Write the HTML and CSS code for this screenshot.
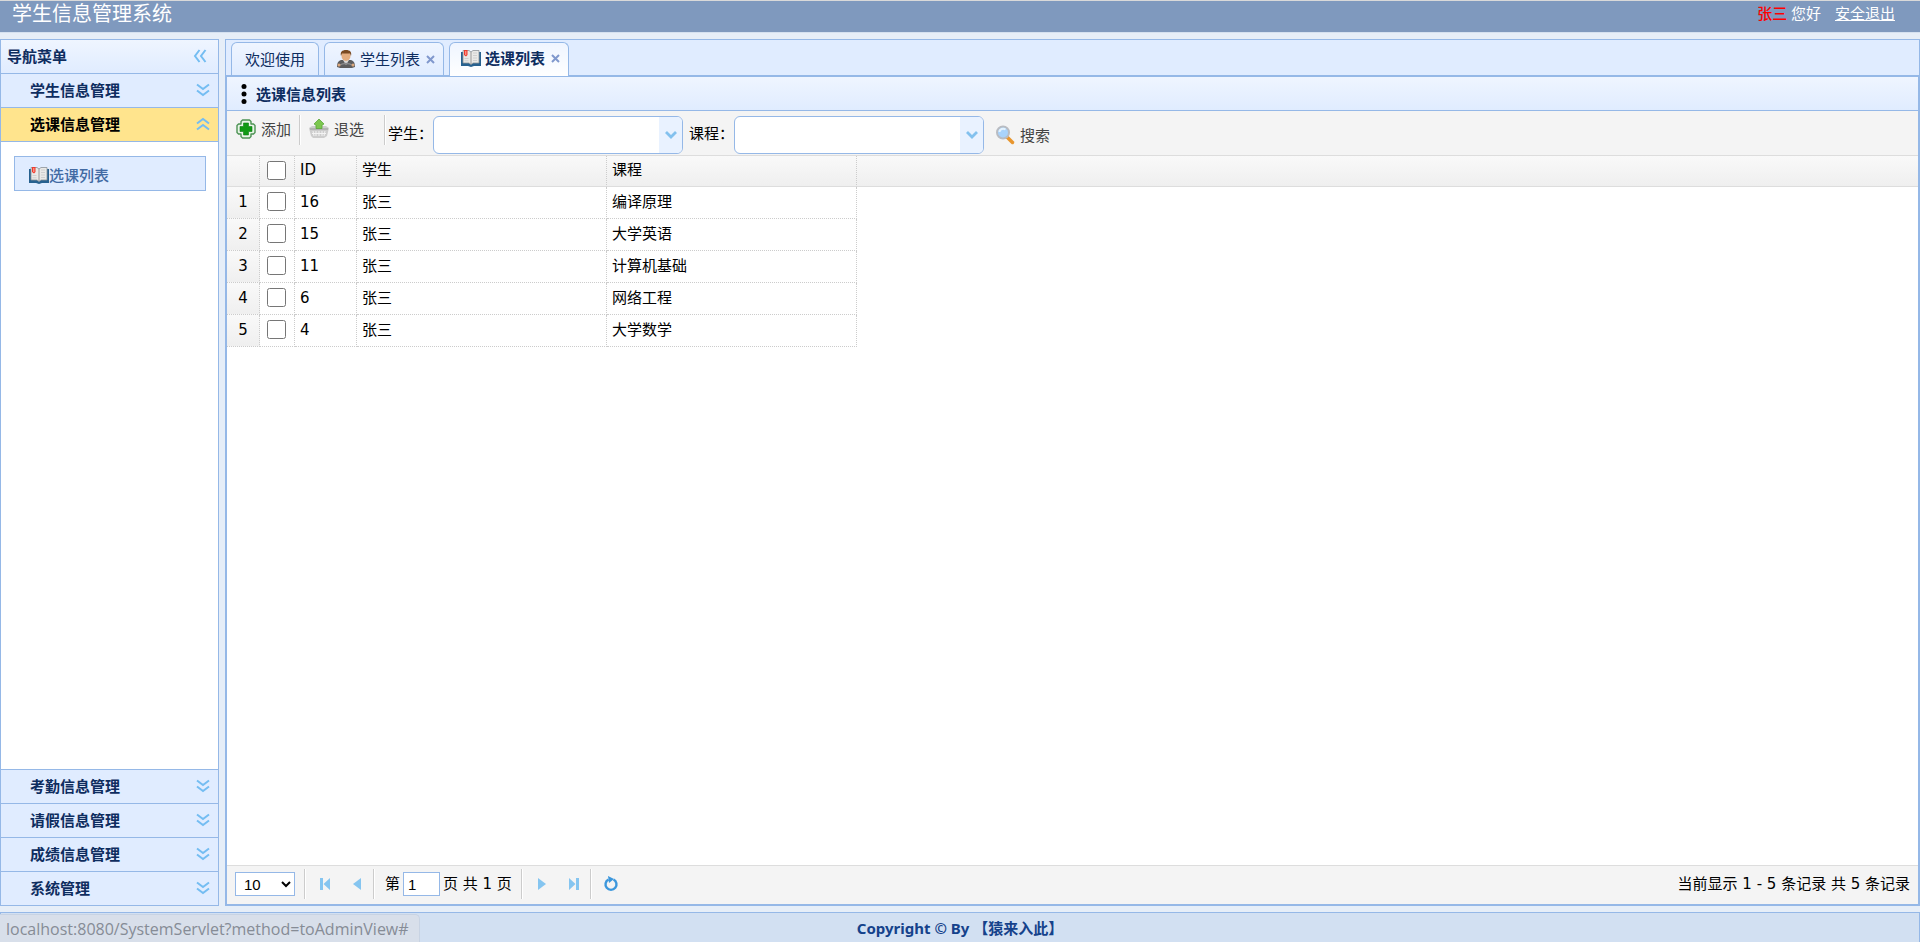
FILE: index.html
```
<!DOCTYPE html>
<html lang="zh-CN">
<head>
<meta charset="utf-8">
<title>学生信息管理系统</title>
<link rel="stylesheet" href="styles.css">
</head>
<body>
<svg class="defs" aria-hidden="true">
  <symbol id="book" viewBox="0 0 20 18">
    <path d="M0 3h2v11h6l2 1 2-1h6V3h2v14h-7l-3 1-3-1H0z" fill="#27618f"/>
    <path d="M2 1.500h6l2 1.500 2-1.500h6V14h-6l-2 1.500L8 14H2z" fill="#e9e9e7" stroke="#8c9297" stroke-width=".8"/>
    <path d="M10 3v12" stroke="#999" stroke-width="1"/>
    <path d="M12 4h4M12 6.500h4M12 9h4M12 11.500h4M3.500 9.500h4M3.500 11.800h4" stroke="#cfcfcf"/>
    <path d="M3 1h3.500v5L5 7.500 3 6z" fill="#ef3b2d"/>
    <path d="M4.800 2v4" stroke="#ffb0a5"/>
  </symbol>
  <symbol id="user" viewBox="0 0 18 18">
    <path d="M0 17c0-5 2-7 5-7h8c3 0 5 2 5 7l-3 1H3z" fill="#5c5c5e"/>
    <path d="M6 10l3 5 3-5z" fill="#d8d8d8"/>
    <path d="M3 15c3-2 9-2 12 0" stroke="#8a8a8c" fill="none" stroke-width="1.500"/>
    <circle cx="2" cy="15" r="1.500" fill="#dba77c"/><circle cx="16" cy="15" r="1.500" fill="#dba77c"/>
    <ellipse cx="9" cy="6" rx="4.500" ry="5" fill="#e3ad80"/>
    <path d="M4 6C3 2 5 0 9 0s6 2 5 6l-1-2.500H5z" fill="#7a4a22"/>
  </symbol>
  <symbol id="down2" viewBox="0 0 14 14"><path d="M1 1.500l6 4.500 6-4.500M1 7.500L7 12l6-4.500" fill="none" stroke="#74bdf2" stroke-width="2"/></symbol>
  <symbol id="chev" viewBox="0 0 14 10"><path d="M2 2l5 5 5-5" fill="none" stroke="#83c1ee" stroke-width="2.800"/></symbol>
  <symbol id="first" viewBox="0 0 12 14"><path d="M1 1h3v12H1zM11 1v12L4.500 7z" fill="#85c5f0"/></symbol>
  <symbol id="prev" viewBox="0 0 12 14"><path d="M10 1v12L2 7z" fill="#85c5f0"/></symbol>
</svg>

<header class="top">
  <h1 class="brand">学生信息管理系统</h1>
  <div class="account"><span class="name">张三</span> 您好 <a class="logout" href="#">安全退出</a></div>
</header>

<div class="work">
  <nav class="side">
    <div class="side-head">导航菜单
      <button class="plain" aria-label="收起"><svg class="ic14 left" ><use href="#down2"/></svg></button>
    </div>
    <button class="acc">学生信息管理<svg class="ic14"><use href="#down2"/></svg></button>
    <button class="acc open">选课信息管理<svg class="ic14 up"><use href="#down2"/></svg></button>
    <div class="acc-body">
      <a class="leaf" href="#"><svg class="ic-book"><use href="#book"/></svg>选课列表</a>
    </div>
    <button class="acc">考勤信息管理<svg class="ic14"><use href="#down2"/></svg></button>
    <button class="acc">请假信息管理<svg class="ic14"><use href="#down2"/></svg></button>
    <button class="acc">成绩信息管理<svg class="ic14"><use href="#down2"/></svg></button>
    <button class="acc">系统管理<svg class="ic14"><use href="#down2"/></svg></button>
  </nav>

  <main class="main">
    <div class="tabs">
      <div class="tab"><button class="tab-btn">欢迎使用</button></div>
      <div class="tab closable">
        <button class="tab-btn"><svg class="ic-book"><use href="#user"/></svg>学生列表</button>
        <button class="close" aria-label="关闭学生列表"><svg class="ic-x" viewBox="0 0 9 9"><path d="M1 1l7 7M8 1L1 8" stroke="#8098cd" stroke-width="2"/></svg></button>
      </div>
      <div class="tab closable current">
        <button class="tab-btn"><svg class="ic-book"><use href="#book"/></svg>选课列表</button>
        <button class="close" aria-label="关闭选课列表"><svg class="ic-x" viewBox="0 0 9 9"><path d="M1 1l7 7M8 1L1 8" stroke="#8098cd" stroke-width="2"/></svg></button>
      </div>
    </div>

    <section class="panel">
      <h2 class="panel-head">
        <svg class="dots" viewBox="0 0 6 20"><circle cx="3" cy="2.500" r="2.500"/><circle cx="3" cy="10" r="2.500"/><circle cx="3" cy="17.500" r="2.500"/></svg>选课信息列表
      </h2>
      <div class="tools">
        <button class="tool add"><svg class="ic20" viewBox="0 0 20 20"><path d="M6.500 1h7l1.500 1.500V5h2.500L19 6.500v7L17.500 15H15v2.500L13.500 19h-7L5 17.500V15H2.500L1 13.500v-7L2.500 5H5V2.500z" fill="#e9f5e8" stroke="#4c9253" stroke-width="1.400" stroke-linejoin="round"/><path d="M7.500 4h5v3.500H16v5h-3.500V16h-5v-3.500H4v-5h3.500z" fill="#109a14" stroke="#0c7d10" stroke-width=".6"/></svg>添加</button>
        <span class="sep"></span>
        <button class="tool drop"><svg class="ic20" viewBox="0 0 20 20"><path d="M0 9l3-2h14l3 2-2 8-3 2H4l-2-2z" fill="#cdcdcd"/><path d="M1 10h18" stroke="#aaa" stroke-width="1.500"/><path d="M4 12l1 5M7 12v5M10 12v5M13 12v5M16 12l-1 5M3 14.500h14" stroke="#f4f4f4"/><path d="M10 0l5 5-2 1v3.500H7V6L5 5z" fill="#7cc74f" stroke="#5aa63a" stroke-width=".8"/></svg>退选</button>
        <span class="sep"></span>
        <label for="student">学生：</label>
        <span class="combo"><input id="student" type="text"><button class="arrow" aria-label="展开学生"><svg class="ic-chev"><use href="#chev"/></svg></button></span>
        <label class="second" for="course">课程：</label>
        <span class="combo"><input id="course" type="text"><button class="arrow" aria-label="展开课程"><svg class="ic-chev"><use href="#chev"/></svg></button></span>
        <button class="tool search"><svg class="ic20" viewBox="0 0 20 20"><path d="M12 12l5.500 5.500" stroke="#e8962e" stroke-width="3.500" stroke-linecap="round"/><circle cx="8" cy="7.500" r="6" fill="#a9d3fb" stroke="#b9bcc2" stroke-width="2"/><path d="M4.500 7c0-3 4-4 6-2.500" stroke="#e4f3ff" stroke-width="2" fill="none"/></svg>搜索</button>
      </div>

      <div class="grid">
        <table>
          <colgroup><col class="c-num"><col class="c-box"><col class="c-id"><col class="c-txt"><col class="c-txt"><col></colgroup>
          <thead><tr><th></th><th class="box"><input type="checkbox" aria-label="全选"></th><th>ID</th><th>学生</th><th>课程</th><th class="rest"></th></tr></thead>
          <tbody>
            <tr><td class="num">1</td><td class="box"><input type="checkbox" aria-label="选择 16"></td><td>16</td><td>张三</td><td>编译原理</td></tr>
            <tr><td class="num">2</td><td class="box"><input type="checkbox" aria-label="选择 15"></td><td>15</td><td>张三</td><td>大学英语</td></tr>
            <tr><td class="num">3</td><td class="box"><input type="checkbox" aria-label="选择 11"></td><td>11</td><td>张三</td><td>计算机基础</td></tr>
            <tr><td class="num">4</td><td class="box"><input type="checkbox" aria-label="选择 6"></td><td>6</td><td>张三</td><td>网络工程</td></tr>
            <tr><td class="num">5</td><td class="box"><input type="checkbox" aria-label="选择 4"></td><td>4</td><td>张三</td><td>大学数学</td></tr>
          </tbody>
        </table>
      </div>

      <div class="pager">
        <select class="size" aria-label="每页条数"><option>10</option><option>20</option></select>
        <span class="sep"></span>
        <button class="pg" aria-label="首页"><svg class="ic-pg"><use href="#first"/></svg></button>
        <button class="pg" aria-label="上一页"><svg class="ic-pg"><use href="#prev"/></svg></button>
        <span class="sep"></span>
        <label class="before" for="page">第</label><input class="page" id="page" type="text" value="1"><span class="after">页 共 1 页</span>
        <span class="sep"></span>
        <button class="pg" aria-label="下一页"><svg class="ic-pg flip"><use href="#prev"/></svg></button>
        <button class="pg" aria-label="末页"><svg class="ic-pg flip"><use href="#first"/></svg></button>
        <span class="sep"></span>
        <button class="pg" aria-label="刷新"><svg class="ic16" viewBox="0 0 16 16"><path d="M5.500 3.500A5.500 5.500 0 1 0 10.500 3.500" fill="none" stroke="#3c97dc" stroke-width="2.400"/><path d="M5 0l6 3-5 4z" fill="#3c97dc"/></svg></button>
        <span class="info">当前显示 1 - 5 条记录 共 5 条记录</span>
      </div>
    </section>
  </main>
</div>

<footer class="foot">Copyright © By 【猿来入此】</footer>
<div class="status">localhost:8080/SystemServlet?method=toAdminView#</div>
</body>
</html>
```
FILE: styles.css
```
* { box-sizing: border-box; }

body {
  margin: 0;
  height: 100vh;
  display: flex;
  flex-direction: column;
  overflow: hidden;
  background: #e6eef8;
  color: #000;
  font: 15px/20px "Noto Sans", "Noto Sans CJK SC", sans-serif;
}

button, input, select { font: inherit; color: inherit; }
button { border: 0; padding: 0; background: none; cursor: pointer; }
svg { flex: none; display: block; }
.defs { position: absolute; width: 0; height: 0; }

.ic14 { width: 14px; height: 14px; }
.ic16 { width: 16px; height: 16px; }
.ic20 { width: 20px; height: 20px; }
.ic-book { width: 20px; height: 18px; }
.ic-chev { width: 14px; height: 10px; }
.ic-pg { width: 12px; height: 14px; }
.ic-x { width: 9px; height: 9px; }
.up { transform: rotate(180deg); }
.left { transform: rotate(90deg); }
.flip { transform: rotate(180deg); }

/* header */
.top {
  flex: none;
  display: flex;
  justify-content: space-between;
  height: 33px;
  padding: 0 25px 0 12px;
  border-top: 1px solid #d9d9d9;
  border-bottom: 1px solid #d5e1f0;
  background: #7f99be;
  color: #fff;
}
.brand { margin: 0; font-size: 20px; line-height: 26px; font-weight: 400; }
.account { line-height: 24px; white-space: pre; }
.name { color: #f00; font-weight: 500; }
.logout { margin-left: 10px; color: #fff; }

/* work area */
.work { flex: 1; min-height: 0; display: flex; gap: 6px; padding: 6px 0; }

.side {
  flex: none;
  width: 219px;
  display: flex;
  flex-direction: column;
  border: 1px solid #95b8e7;
  background: #fff;
}
.side-head {
  display: flex;
  align-items: center;
  justify-content: space-between;
  height: 33px;
  padding: 0 11px 2px 6px;
  background: linear-gradient(#eff5ff, #e0ecff);
  color: #0e2d5f;
  font-weight: 700;
}
.acc {
  flex: none;
  display: flex;
  align-items: center;
  justify-content: space-between;
  height: 34px;
  padding: 0 8px 1px 29px;
  border-top: 1px solid #95b8e7;
  background: #e0ecff;
  color: #0e2d5f;
  font-weight: 700;
}
.acc.open { background: #ffe48d; color: #000; }
.acc-body { flex: 1; padding: 14px 12px 14px 13px; border-top: 1px solid #95b8e7; }
.leaf {
  display: flex;
  align-items: center;
  height: 35px;
  padding: 3px 14px 0;
  border: 1px solid #95b8e7;
  background: #e0ecff;
  color: #416aa3;
  font-weight: 500;
  text-decoration: none;
}

/* tabs */
.main { flex: 1; min-width: 0; display: flex; flex-direction: column; }
.tabs {
  flex: none;
  display: flex;
  gap: 5px;
  height: 37px;
  padding: 2px 5px 0;
  border: 1px solid #95b8e7;
  background: #e0ecff;
}
.tab {
  display: flex;
  align-items: center;
  height: 33px;
  padding: 0 13px;
  border: 1px solid #95b8e7;
  border-bottom: 0;
  border-radius: 6px 6px 0 0;
  background: linear-gradient(#eff5ff, #e0ecff);
  color: #0e2d5f;
}
.tab.closable { padding: 0 8px 0 11px; }
.tab-btn { display: flex; align-items: center; gap: 4px; }
.close { margin-left: 6px; }
.tab.current { height: 35px; padding-bottom: 4px; background: linear-gradient(#eff5ff, #fff); font-weight: 700; }

/* content panel */
.panel {
  flex: 1;
  min-height: 0;
  display: flex;
  flex-direction: column;
  border: 2px solid #95b8e7;
  border-top-width: 1px;
  background: #fff;
}
.panel-head {
  flex: none;
  display: flex;
  align-items: center;
  gap: 9px;
  height: 34px;
  margin: 0;
  padding: 0 14px;
  border-bottom: 1px solid #95b8e7;
  background: linear-gradient(#eff5ff, #e0ecff);
  color: #0e2d5f;
  font-size: 15px;
}
.dots { width: 6px; height: 20px; fill: #000; }

.tools {
  flex: none;
  display: flex;
  align-items: flex-start;
  height: 45px;
  padding: 4px 9px 0;
  border-bottom: 1px solid #ddd;
  background: #f4f4f4;
}
.sep { flex: none; width: 2px; height: 30px; border-left: 1px solid #ccc; border-right: 1px solid #fff; }
.tool { display: flex; align-items: center; gap: 5px; height: 28px; color: #444; }
.add { margin-right: 8px; }
.drop { margin: 0 20px 0 8px; }
.search { margin: 6px 0 0 11px; }
.tools label { margin-left: 2px; line-height: 36px; }
.tools .second { margin-left: 6px; }
.combo {
  display: flex;
  width: 250px;
  height: 38px;
  margin-top: 1px;
  border: 1px solid #95b8e7;
  border-radius: 6px;
  background: #fff;
  overflow: hidden;
}
.combo input { flex: 1; min-width: 0; border: 0; padding: 0 6px; background: none; }
.arrow { width: 23px; display: flex; align-items: center; justify-content: center; background: #e9f2ff; }

/* data grid */
.grid, .pager { font-family: "DejaVu Sans", "Noto Sans CJK SC", sans-serif; }
.grid { flex: 1; min-height: 0; overflow: auto; }
table { width: 100%; table-layout: fixed; border-collapse: separate; border-spacing: 0; }
.c-num { width: 33px; }
.c-box { width: 35px; }
.c-id { width: 62px; }
.c-txt { width: 250px; }
th, td { height: 32px; padding: 0 5px 2px; border-right: 1px dotted #ccc; border-bottom: 1px dotted #ccc; text-align: left; }
th { height: 31px; border-bottom: 1px solid #ddd; background: linear-gradient(#f9f9f9, #efefef); font-weight: 400; }
th.rest { border-right: 0; }
td.num { padding: 0 0 2px; background: linear-gradient(#f9f9f9, #efefef); text-align: center; }
td.box, th.box { padding: 0 7px 2px; }
.box input { display: block; width: 19px; height: 19px; margin: 0; }

/* pager */
.pager {
  flex: none;
  display: flex;
  align-items: center;
  height: 39px;
  padding: 0 8px 2px;
  border-top: 1px solid #ddd;
  background: #f4f4f4;
}
.size, .page { height: 24px; border: 1px solid #95b8e7; background: #fff; font-family: "Liberation Sans", sans-serif; }
.size { width: 60px; margin-right: 9px; padding: 0 4px; }
.pg { width: 32px; height: 30px; display: flex; align-items: center; justify-content: center; }
.pager .sep + .pg { margin-left: 3px; }
.before { margin-left: 10px; }
.page { width: 37px; margin: 0 3px; padding: 0 4px; }
.after { margin-right: 9px; }
.info { margin-left: auto; }

/* footer */
.foot {
  flex: none;
  height: 30px;
  border: 1px solid #95b8e7;
  border-bottom: 0;
  background: #d2e0f2;
  color: #15428b;
  font-weight: 700;
  line-height: 30px;
  text-align: center;
}
.status {
  position: absolute;
  left: 0;
  bottom: 0;
  height: 28px;
  padding: 0 10px 0 6px;
  border: 1px solid #c8d3e3;
  border-width: 1px 1px 0 0;
  border-radius: 0 5px 0 0;
  background: #d8dfea;
  color: #868c96;
  font-family: "Open Sans", "Noto Sans", sans-serif;
  font-size: 16px;
  line-height: 28px;
}
```
